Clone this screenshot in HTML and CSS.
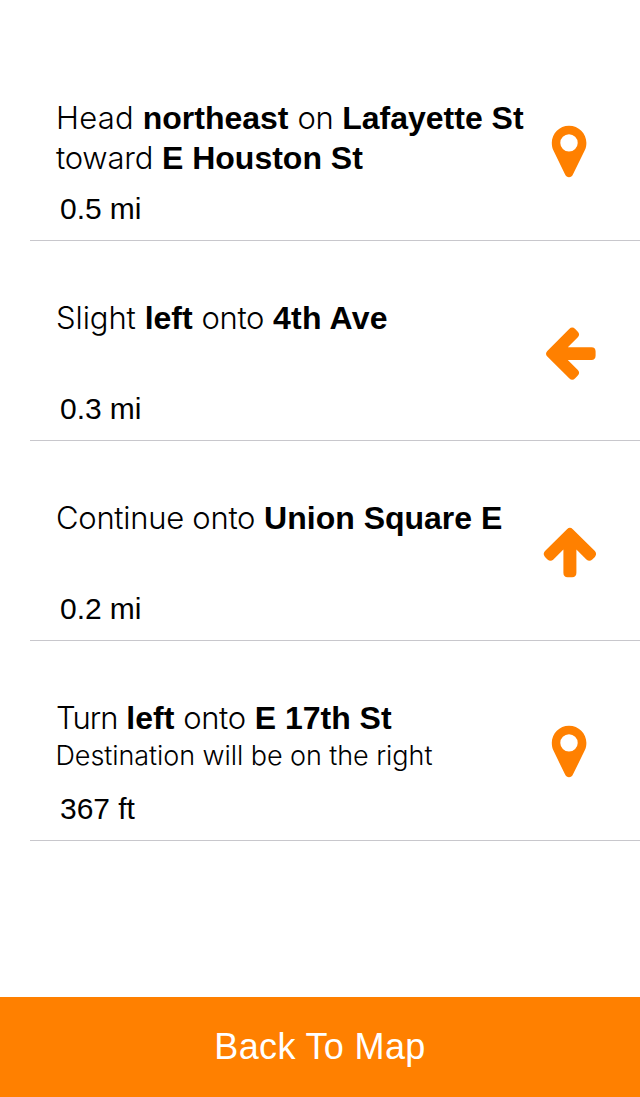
FILE: index.html
```html
<!DOCTYPE html>
<html lang="en">
<head>
<meta charset="utf-8">
<title>Directions</title>
<link rel="stylesheet" href="styles.css">
</head>
<body>
<main class="screen">
  <ol class="steps">
    <li class="step">
      <div class="step-text">
        <p class="instruction"><span class="w-head">Head</span> <b>northeast</b> <span>on</span> <b>Lafayette St</b><br><span class="w-toward">toward</span> <b>E Houston St</b></p>
        <p class="distance">0.5 mi</p>
      </div>
      <svg class="icon" viewBox="0 0 60 60"><path fill-rule="evenodd" d="M29 5.7C19.5 5.7 11.8 13.3 11.8 22.8C11.8 25.6 12.3 28 13.2 30.1L25.1 54.6C26 56.3 27.3 57.3 29 57.3C30.8 57.3 32.1 56.3 32.9 54.6L44.9 30.1C45.9 28 46.4 25.6 46.4 22.8C46.4 13.3 38.6 5.7 29 5.7ZM29 14.2A8.7 8.7 0 1 1 29 31.6A8.7 8.7 0 1 1 29 14.2Z"/></svg>
    </li>
    <li class="step">
      <div class="step-text">
        <p class="instruction"><span class="w-slight">Slight</span> <b>left</b> <span>onto</span> <b class="b-ave">4th Ave</b></p>
        <p class="distance">0.3 mi</p>
      </div>
      <svg class="icon" viewBox="0 0 60 60"><path d="M7.3 30.9L29.2 9Q32.2 6.2 35.2 9L37.6 11.4Q40.6 14.4 37.6 17.4L27.8 27.2H51.5Q55.6 27.2 55.6 31.5V35.6Q55.6 40 51.5 40H27.8L37.6 49.8Q40.6 52.8 37.6 55.8L35.2 58.2Q32.2 61.2 29.2 58.2L7.3 36.5Q4.7 33.7 7.3 30.9Z"/></svg>
    </li>
    <li class="step">
      <div class="step-text">
        <p class="instruction"><span class="w-cont">Continue onto</span> <b>Union Square E</b></p>
        <p class="distance">0.2 mi</p>
      </div>
      <svg class="icon" viewBox="0 0 60 60"><path d="M27 9.2Q29.9 6.5 32.8 9.2L54.9 31.1Q57.3 34 54.9 36.9L52.3 39.5Q49.4 42.2 46.4 39.5L36.4 29.6V52.8Q36.4 57.2 32.1 57.2H27.6Q23.4 57.2 23.4 52.8V29.6L13.4 39.5Q10.5 42.2 7.5 39.5L5 36.9Q2.4 34 5 31.1Z"/></svg>
    </li>
    <li class="step">
      <div class="step-text">
        <p class="instruction"><span class="w-turn">Turn</span> <b>left</b> <span>onto</span> <b>E 17th St</b></p>
        <p class="note">Destination will be on the right</p>
        <p class="distance">367 ft</p>
      </div>
      <svg class="icon" viewBox="0 0 60 60"><path fill-rule="evenodd" d="M29 5.7C19.5 5.7 11.8 13.3 11.8 22.8C11.8 25.6 12.3 28 13.2 30.1L25.1 54.6C26 56.3 27.3 57.3 29 57.3C30.8 57.3 32.1 56.3 32.9 54.6L44.9 30.1C45.9 28 46.4 25.6 46.4 22.8C46.4 13.3 38.6 5.7 29 5.7ZM29 14.2A8.7 8.7 0 1 1 29 31.6A8.7 8.7 0 1 1 29 14.2Z"/></svg>
    </li>
  </ol>
  <button class="back">Back To Map</button>
</main>
</body>
</html>
```
FILE: styles.css
```css
* { box-sizing: border-box; }
body { margin: 0; background: #fff; color: #000; font-family: "Liberation Sans", Arial, sans-serif; }
p { margin: 0; white-space: nowrap; }
.screen { display: flex; flex-direction: column; height: 1097px; overflow: hidden; }
.steps { list-style: none; margin: 0; padding: 41px 0 0 30px; flex: 1; }
.step { display: flex; height: 200px; padding: 57px 40px 0 26px; border-bottom: 1px solid #c8c7cc; }
.step-text { flex: 1; min-width: 0; display: flex; flex-direction: column; padding-bottom: 12px; }
.instruction { font-size: 32px; line-height: 40px; }
.instruction span { font-family: Inter, sans-serif; font-weight: 300; font-size: 31px; letter-spacing: -0.35px; }
.instruction .w-head { letter-spacing: 0.22px; }
.instruction .w-toward { letter-spacing: -0.22px; }
.instruction .w-slight { letter-spacing: -0.08px; }
.instruction .w-cont { letter-spacing: -0.28px; }
.instruction .w-turn { letter-spacing: -1px; }
.b-ave { letter-spacing: 0.2px; }
.note { font-family: Inter, sans-serif; font-weight: 300; font-size: 27px; line-height: 36px; letter-spacing: -0.07px; margin-left: -0.5px; }
.distance { margin-top: auto; padding-left: 4px; font-size: 30px; line-height: 38px; letter-spacing: -0.05px; }
.icon { flex: none; width: 60px; height: 60px; margin-top: 22px; fill: #ff8000; }
.back { flex: none; height: 100px; border: 0; padding: 0; background: #ff8000; color: #fff; font: 36px "Liberation Sans", Arial, sans-serif; letter-spacing: 0.36px; }
```
